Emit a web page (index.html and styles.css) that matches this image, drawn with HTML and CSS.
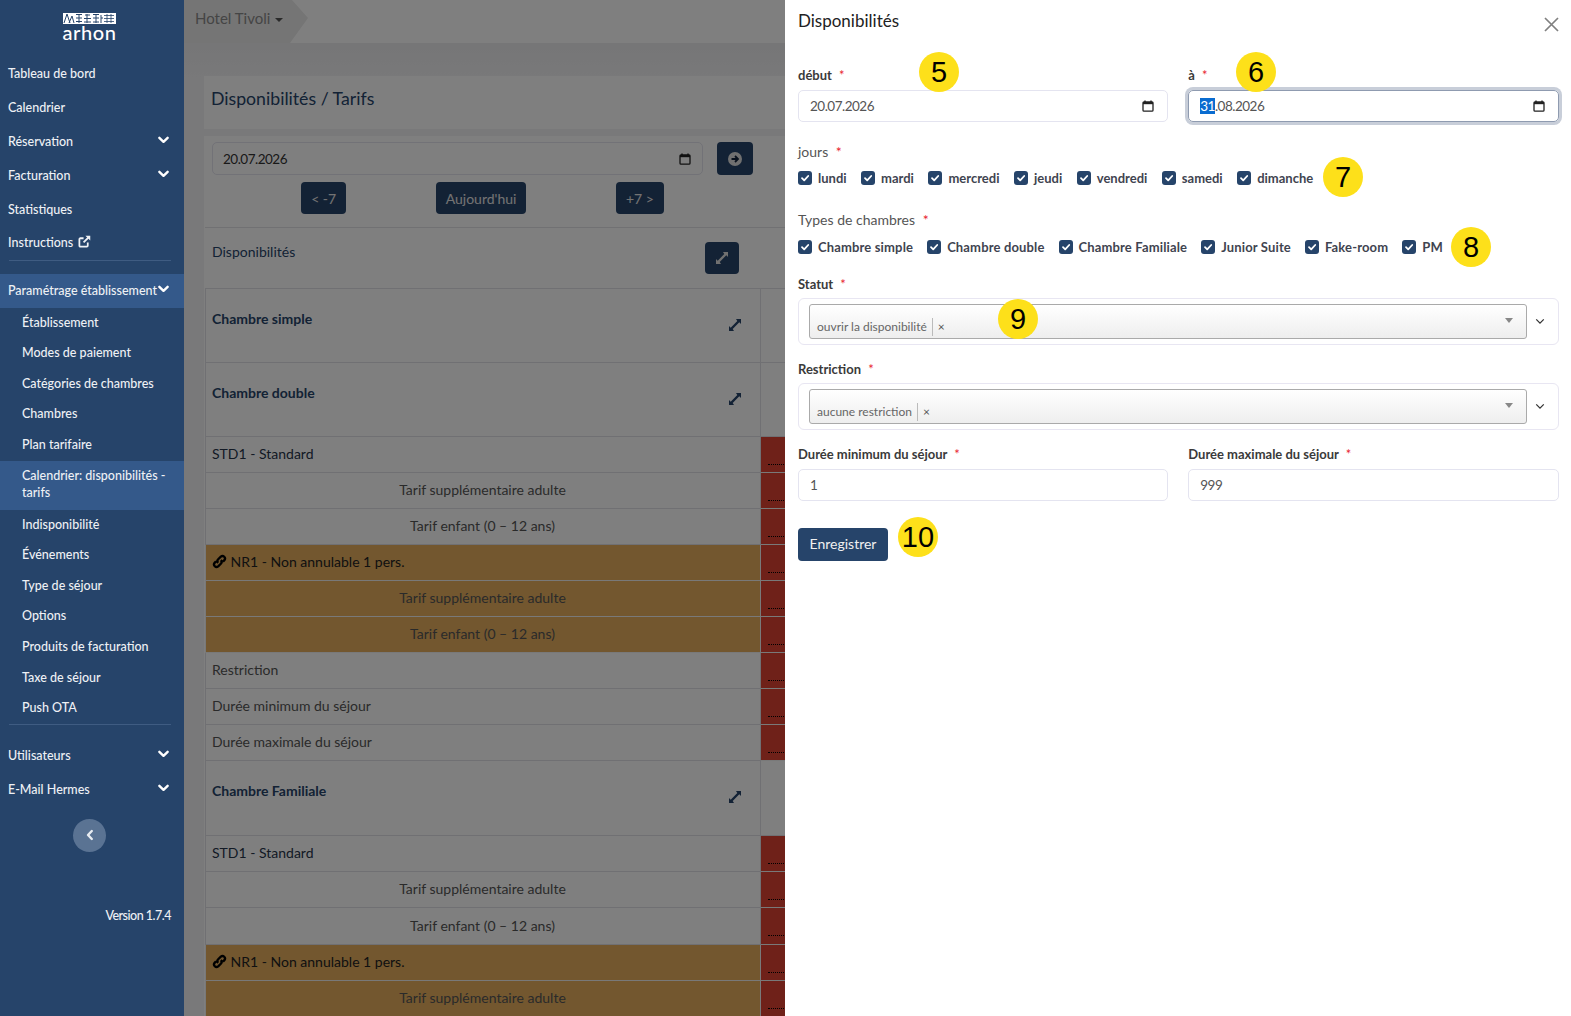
FILE: index.html
```html
<!DOCTYPE html>
<html lang="fr">
<head>
<meta charset="UTF-8" />
<title>Disponibilités / Tarifs</title>
<link rel="stylesheet" href="styles.css">
</head>
<body>
<svg class="sprite" aria-hidden="true">
  <symbol id="i-chevron" viewBox="0 0 12 8"><path d="M1.5 1.6 6 6l4.5-4.4" fill="none" stroke="currentColor" stroke-width="2.6" stroke-linecap="round" stroke-linejoin="round"/></symbol>
  <symbol id="i-calendar" viewBox="0 0 12 12"><path d="M3 .5v2M9 .5v2" stroke="currentColor" stroke-width="1.4" fill="none"/><rect x="1" y="1.8" width="10" height="9.4" rx="1" fill="none" stroke="currentColor" stroke-width="1.3"/><path d="M1 2h10v2.2H1z" fill="currentColor"/></symbol>
  <symbol id="i-check" viewBox="0 0 14 14"><path d="M4 7.2 6.2 9.4 10.2 5" fill="none" stroke="#fff" stroke-width="1.8" stroke-linecap="round" stroke-linejoin="round"/></symbol>
  <symbol id="i-expand" viewBox="0 0 14 14"><path d="M8 1h5v5l-1.700-1.700-6.600 6.600L6 13H1V8l1.700 1.700 6.600-6.600z" fill="currentColor"/></symbol>
  <symbol id="i-link" viewBox="0 0 16 16"><path d="M6.600 9.400a2.700 2.700 0 0 1 0-3.800l2.800-2.800a2.700 2.700 0 0 1 3.800 3.800l-1.500 1.500M9.400 6.600a2.700 2.700 0 0 1 0 3.800l-2.800 2.800a2.700 2.700 0 0 1-3.800-3.800l1.500-1.500" fill="none" stroke="currentColor" stroke-width="2.500"/></symbol>
  <symbol id="i-external" viewBox="0 0 14 14"><path d="M10.500 8v3.500a1 1 0 0 1-1 1h-7a1 1 0 0 1-1-1v-7a1 1 0 0 1 1-1H6" fill="none" stroke="currentColor" stroke-width="1.900"/><path d="M8 .8h5.200V6l-1.900-1.900-4.600 4.600-1.400-1.400 4.600-4.600z" fill="currentColor"/></symbol>
</svg>

<div class="app">
  <aside class="sidebar">
    <div class="logo">
      <svg class="logo-mark" viewBox="0 0 53 11" aria-hidden="true">
        <rect width="53" height="11" fill="#fff"/>
        <path d="M1 10 4 1l3 9M6 10 9 3l2 7M13 1.500h6M13 5h6M13 8.500h6M16 1v9M22 2h5M21 5.500h7M24 1v9M21 9h7M30 1.500h6M30 5h6M30 9h6M33 1v9M38 2v8M38 5h2" stroke="#26446a" stroke-width="1" fill="none"/>
        <path d="M41 2.500h10M41 5.500h10M41 8.500h10M44 1v9M48 1v9" stroke="#26446a" stroke-width=".8" fill="none"/>
      </svg>
      <span class="logo-name">arhon</span>
    </div>
    <nav class="menu">
      <a class="menu-item">Tableau de bord</a>
      <a class="menu-item">Calendrier</a>
      <a class="menu-item">Réservation <svg class="chev"><use href="#i-chevron"/></svg></a>
      <a class="menu-item">Facturation <svg class="chev"><use href="#i-chevron"/></svg></a>
      <a class="menu-item">Statistiques</a>
      <a class="menu-item">Instructions <svg class="ext"><use href="#i-external"/></svg></a>
      <hr class="menu-rule rule-top">
      <a class="menu-item is-open">Paramétrage établissement <svg class="chev"><use href="#i-chevron"/></svg></a>
      <a class="sub-item">Établissement</a>
      <a class="sub-item">Modes de paiement</a>
      <a class="sub-item">Catégories de chambres</a>
      <a class="sub-item">Chambres</a>
      <a class="sub-item">Plan tarifaire</a>
      <a class="sub-item is-active">Calendrier: disponibilités - tarifs</a>
      <a class="sub-item">Indisponibilité</a>
      <a class="sub-item">Événements</a>
      <a class="sub-item">Type de séjour</a>
      <a class="sub-item">Options</a>
      <a class="sub-item">Produits de facturation</a>
      <a class="sub-item">Taxe de séjour</a>
      <a class="sub-item">Push OTA</a>
      <hr class="menu-rule rule-bottom">
      <a class="menu-item">Utilisateurs <svg class="chev"><use href="#i-chevron"/></svg></a>
      <a class="menu-item">E-Mail Hermes <svg class="chev"><use href="#i-chevron"/></svg></a>
    </nav>
    <button class="collapse" type="button"><svg class="collapse-icon" viewBox="0 0 8 12"><path d="M5.800 2 2 6l3.800 4" fill="none" stroke="currentColor" stroke-width="2.400" stroke-linecap="round" stroke-linejoin="round"/></svg></button>
    <div class="version">Version 1.7.4</div>
  </aside>

  <main class="main">
    <header class="topbar">
      <div class="crumb">Hotel Tivoli <span class="caret"></span></div>
    </header>
    <div class="content">
      <div class="page-title">Disponibilités / Tarifs</div>
      <div class="card">
        <div class="date-row">
          <div class="date-input">20.07.2026 <svg class="cal"><use href="#i-calendar"/></svg></div>
          <button class="btn btn-go" type="button">
            <svg class="go-icon" viewBox="0 0 14 14"><circle cx="7" cy="7" r="7" fill="currentColor"/><path d="M3.500 7h6M7 4l3 3-3 3" stroke="#13233a" stroke-width="1.800" fill="none"/></svg>
          </button>
        </div>
        <div class="week-row">
          <button class="btn" type="button">&lt; -7</button>
          <button class="btn" type="button">Aujourd'hui</button>
          <button class="btn" type="button">+7 &gt;</button>
        </div>
        <hr class="card-rule">
        <div class="avail-head">
          <span>Disponibilités</span>
          <button class="btn btn-expand" type="button"><svg class="expand-big"><use href="#i-expand"/></svg></button>
        </div>
        <table class="grid">
          <colgroup><col class="col-label"><col></colgroup>
          <tr class="room"><th><div class="room-cell">Chambre simple <svg class="expand-small"><use href="#i-expand"/></svg></div></th><td></td></tr>
          <tr class="room"><th><div class="room-cell">Chambre double <svg class="expand-small"><use href="#i-expand"/></svg></div></th><td></td></tr>
          <tr><td class="rate">STD1 - Standard</td><td class="red"><div class="dots"></div></td></tr>
          <tr><td class="sub-rate">Tarif supplémentaire adulte</td><td class="red"><div class="dots"></div></td></tr>
          <tr><td class="sub-rate">Tarif enfant (0 – 12 ans)</td><td class="red"><div class="dots"></div></td></tr>
          <tr class="linked"><td class="rate"><svg class="link-icon"><use href="#i-link"/></svg> NR1 - Non annulable 1 pers.</td><td class="red"><div class="dots"></div></td></tr>
          <tr class="linked"><td class="sub-rate">Tarif supplémentaire adulte</td><td class="red"><div class="dots"></div></td></tr>
          <tr class="linked"><td class="sub-rate">Tarif enfant (0 – 12 ans)</td><td class="red"><div class="dots"></div></td></tr>
          <tr><td class="rule-name">Restriction</td><td class="red"><div class="dots"></div></td></tr>
          <tr><td class="rule-name">Durée minimum du séjour</td><td class="red"><div class="dots"></div></td></tr>
          <tr><td class="rule-name">Durée maximale du séjour</td><td class="red"><div class="dots"></div></td></tr>
          <tr class="room room-last"><th><div class="room-cell">Chambre Familiale <svg class="expand-small"><use href="#i-expand"/></svg></div></th><td></td></tr>
          <tr><td class="rate">STD1 - Standard</td><td class="red"><div class="dots"></div></td></tr>
          <tr><td class="sub-rate">Tarif supplémentaire adulte</td><td class="red"><div class="dots"></div></td></tr>
          <tr class="tall"><td class="sub-rate">Tarif enfant (0 – 12 ans)</td><td class="red"><div class="dots"></div></td></tr>
          <tr class="linked"><td class="rate"><svg class="link-icon"><use href="#i-link"/></svg> NR1 - Non annulable 1 pers.</td><td class="red"><div class="dots"></div></td></tr>
          <tr class="linked"><td class="sub-rate">Tarif supplémentaire adulte</td><td class="red"><div class="dots"></div></td></tr>
        </table>
      </div>
    </div>
  </main>
</div>

<div class="backdrop"></div>

<section class="panel">
  <div class="panel-head">
    <h2 class="panel-title">Disponibilités</h2>
    <svg class="close" viewBox="0 0 15 15"><path d="M1 1l13 13M14 1 1 14" stroke="currentColor" stroke-width="1.700" fill="none"/></svg>
  </div>
  <form class="panel-form">
    <div class="two-cols">
      <div>
        <label class="lbl">début <i>*</i></label>
        <div class="field">20.07.2026 <svg class="cal"><use href="#i-calendar"/></svg></div>
      </div>
      <div>
        <label class="lbl">à <i>*</i></label>
        <div class="field is-focus"><span class="sel">31</span>.08.2026 <svg class="cal"><use href="#i-calendar"/></svg></div>
      </div>
    </div>

    <label class="lbl lbl-light lbl-jours">jours <i>*</i></label>
    <div class="checks checks-jours">
      <span class="chk"><svg class="box"><use href="#i-check"/></svg>lundi</span>
      <span class="chk"><svg class="box"><use href="#i-check"/></svg>mardi</span>
      <span class="chk"><svg class="box"><use href="#i-check"/></svg>mercredi</span>
      <span class="chk"><svg class="box"><use href="#i-check"/></svg>jeudi</span>
      <span class="chk"><svg class="box"><use href="#i-check"/></svg>vendredi</span>
      <span class="chk"><svg class="box"><use href="#i-check"/></svg>samedi</span>
      <span class="chk"><svg class="box"><use href="#i-check"/></svg>dimanche</span>
    </div>

    <label class="lbl lbl-light lbl-types">Types de chambres <i>*</i></label>
    <div class="checks checks-types">
      <span class="chk"><svg class="box"><use href="#i-check"/></svg>Chambre simple</span>
      <span class="chk"><svg class="box"><use href="#i-check"/></svg>Chambre double</span>
      <span class="chk"><svg class="box"><use href="#i-check"/></svg>Chambre Familiale</span>
      <span class="chk"><svg class="box"><use href="#i-check"/></svg>Junior Suite</span>
      <span class="chk"><svg class="box"><use href="#i-check"/></svg>Fake-room</span>
      <span class="chk"><svg class="box"><use href="#i-check"/></svg>PM</span>
    </div>

    <label class="lbl lbl-statut">Statut <i>*</i></label>
    <div class="select-wrap">
      <div class="select-inner">
        <span class="tag">ouvrir la disponibilité</span><span class="tag-x">×</span>
        <span class="select-arrow"></span>
      </div>
      <svg class="select-chev" viewBox="0 0 12 8"><path d="M1.500 1.500 6 6l4.500-4.500" fill="none" stroke="currentColor" stroke-width="1.500"/></svg>
    </div>

    <label class="lbl lbl-next">Restriction <i>*</i></label>
    <div class="select-wrap">
      <div class="select-inner">
        <span class="tag">aucune restriction</span><span class="tag-x">×</span>
        <span class="select-arrow"></span>
      </div>
      <svg class="select-chev" viewBox="0 0 12 8"><path d="M1.500 1.500 6 6l4.500-4.500" fill="none" stroke="currentColor" stroke-width="1.500"/></svg>
    </div>

    <div class="two-cols stay-cols">
      <div>
        <label class="lbl">Durée minimum du séjour <i>*</i></label>
        <div class="field">1</div>
      </div>
      <div>
        <label class="lbl">Durée maximale du séjour <i>*</i></label>
        <div class="field">999</div>
      </div>
    </div>

    <button class="save" type="button">Enregistrer</button>
  </form>

  <!-- repères numérotés -->
  <span class="mark mark-5">5</span>
  <span class="mark mark-6">6</span>
  <span class="mark mark-7">7</span>
  <span class="mark mark-8">8</span>
  <span class="mark mark-9">9</span>
  <span class="mark mark-10">10</span>
</section>
</body>
</html>
```

FILE: styles.css
```css
html, body {
  height: 100%;
  margin: 0;
  overflow: hidden;
}
body {
  font-family: Lato, "Noto Sans", sans-serif;
  font-size: 14px;
  color: #333;
  background: #f3f3f5;
}
.sprite {
  display: none;
}
.app {
  display: flex;
  height: 100vh;
}

/* Menu de gauche */
.sidebar {
  position: relative;
  z-index: 2;
  flex: 0 0 184px;
  width: 184px;
  min-width: 0;
  height: 100%;
  background: #26446a;
  color: #eef1f5;
  font-size: 12.5px;
  font-weight: 500;
}
.logo {
  display: flex;
  flex-direction: column;
  align-items: center;
  height: 57px;
  padding: 13px 5px 0 0;
  box-sizing: border-box;
}
.logo-mark {
  display: block;
  width: 53px;
  height: 11px;
}
.logo-name {
  margin-top: -2px;
  font-size: 20px;
  line-height: 20px;
  font-weight: 500;
  letter-spacing: .6px;
  color: #fff;
}
.menu-item {
  display: flex;
  align-items: center;
  justify-content: space-between;
  height: 33.8px;
  padding: 0 15px 0 8px;
  box-sizing: border-box;
}
.menu-item .ext {
  width: 13px;
  height: 13px;
  margin: -2px auto 0 5px;
}
.chev {
  width: 11px;
  height: 8px;
  margin-top: -3px;
  color: #fff;
}
.menu-item.is-open {
  background: #34598a;
  white-space: nowrap;
}
.sub-item {
  display: block;
  padding: 6px 14px 6px 22px;
  line-height: 17px;
  height: 30.6px;
  box-sizing: border-box;
}
.sub-item.is-active {
  height: 49px;
  background: #34598a;
  padding-top: 6px;
}
.menu-rule {
  margin: 0 13px 0 9px;
  border: 0;
  border-top: 1px solid #3f5c82;
}
.rule-top {
  margin-top: 0;
  margin-bottom: 13px;
}
.rule-bottom {
  margin-top: 0;
  margin-bottom: 14px;
}
.collapse {
  display: flex;
  align-items: center;
  justify-content: center;
  width: 33px;
  height: 33px;
  margin: 13px 0 0 73px;
  padding: 0;
  border: 0;
  border-radius: 50%;
  background: #5a7393;
  color: #e8ecf1;
}
.collapse-icon {
  width: 8px;
  height: 12px;
  margin-top: -2px;
}
.version {
  margin-top: 56px;
  padding-right: 13px;
  text-align: right;
  letter-spacing: -.5px;
}

/* Contenu principal */
.main {
  flex: 1;
  min-width: 0;
  overflow: hidden;
}
.topbar {
  height: 43px;
  background: #fff;
}
.crumb {
  width: 124px;
  height: 43px;
  box-sizing: border-box;
  padding: 9px 0 0 11px;
  font-size: 15px;
  color: #8b8b8b;
  background: #eaeaea;
  clip-path: polygon(0 0, 108px 0, 124px 18px, 106px 43px, 0 43px);
}
.caret {
  display: inline-block;
  margin-left: 1px;
  vertical-align: 2px;
  border: 4px solid transparent;
  border-top-color: #555;
  border-bottom: 0;
}
.content {
  padding: 33px 0 0 20px;
  background: linear-gradient(#ececee, #f3f3f5 40px);
}
.page-title {
  height: 53px;
  padding: 12px 0 0 7px;
  box-sizing: border-box;
  background: #fff;
  font-size: 17.7px;
  color: #26446a;
}
.card {
  margin-top: 7px;
  background: #fff;
}
.date-row {
  display: flex;
  gap: 14px;
  width: 541px;
  margin-left: 8px;
  padding-top: 6px;
}
.date-input {
  flex: 1;
  display: flex;
  align-items: center;
  justify-content: space-between;
  height: 33px;
  padding: 0 11px 0 10px;
  box-sizing: border-box;
  border: 1px solid #e4e4ee;
  border-radius: 5px;
  color: #333;
  font-size: 13.5px;
  letter-spacing: -.5px;
}
.cal {
  width: 12px;
  height: 12px;
  color: #222;
}
.btn {
  height: 32px;
  padding: 0 10px;
  border: 0;
  border-radius: 4px;
  background: #26446a;
  color: #e6e6e6;
  font: inherit;
  font-size: 14px;
}
.btn-go {
  width: 36px;
  height: 33px;
  display: flex;
  align-items: center;
  justify-content: center;
  padding: 0;
}
.go-icon {
  width: 14px;
  height: 14px;
  color: #e0e0e0;
}
.week-row {
  display: flex;
  justify-content: center;
  gap: 89.5px;
  width: 541px;
  margin: 7px 0 13px 8px;
}
.card-rule {
  margin: 0 0 0 1px;
  border: 0;
  border-top: 1px solid #e2e2e6;
}
.avail-head {
  display: flex;
  justify-content: space-between;
  width: 534px;
  height: 60px;
  box-sizing: border-box;
  margin-left: 1px;
  padding: 14px 0 0 7px;
  line-height: 20px;
  color: #26446a;
}
.btn-expand {
  width: 34px;
  height: 32px;
  padding: 0;
  display: flex;
  align-items: center;
  justify-content: center;
}
.expand-big {
  width: 14px;
  height: 14px;
  color: #e0e0e0;
}

/* Tableau des tarifs */
.grid {
  width: calc(100% - 1px);
  margin-left: 1px;
  table-layout: fixed;
  border-collapse: collapse;
}
.col-label {
  width: 555px;
}
.grid td, .grid th {
  height: 36px;
  padding: 0 7px 2px 6px;
  box-sizing: border-box;
  border: 1px solid #e0e0e6;
  font-size: 14px;
  font-weight: 400;
  text-align: left;
}
.grid .room th, .grid .room td {
  height: 74px;
  padding: 0 7px 0 6px;
  vertical-align: top;
}
.grid .room-last th, .grid .room-last td {
  height: 75px;
}
.room-cell {
  display: flex;
  justify-content: space-between;
  padding: 21px 11px 0 0;
  font-weight: 700;
  color: #26446a;
}
.expand-small {
  width: 14px;
  height: 14px;
  margin-top: 8px;
  color: #26446a;
}
.grid .rate {
  color: #26344a;
}
.grid .sub-rate {
  text-align: center;
  color: #555;
}
.grid .rule-name {
  color: #555;
}
.grid .tall td {
  height: 37px;
}
.linked td {
  background: #e6ae5e;
  border-color: #f2f2f2;
}
.grid .linked .rate {
  color: #222;
}
.link-icon {
  width: 15px;
  height: 15px;
  vertical-align: -2px;
  color: #000;
}
.grid .red {
  padding: 0 0 0 7px;
  background: #de4232;
  border-color: #f2f2f2;
  vertical-align: top;
}
.dots {
  height: 27px;
  border-bottom: 1px dotted #000;
}

/* Voile et panneau latéral */
.backdrop {
  position: fixed;
  top: 0;
  right: 0;
  bottom: 0;
  left: 184px;
  z-index: 1;
  background: rgba(0, 0, 0, .5);
}
.panel {
  position: fixed;
  top: 0;
  right: 0;
  bottom: 0;
  z-index: 3;
  width: 786px;
  background: #fff;
  color: #333;
  font-size: 13px;
}
.panel-head {
  display: flex;
  justify-content: space-between;
  height: 42px;
  padding: 0 12px 0 13px;
}
.panel-title {
  margin: 0;
  font-size: 17px;
  font-weight: 400;
  line-height: 42px;
  color: #222;
}
.close {
  width: 15px;
  height: 15px;
  margin: 17px 0 0 0;
  color: #808080;
}
.panel-form {
  padding: 24px 12.5px 0 13px;
}
.two-cols {
  display: grid;
  grid-template-columns: 1fr 1fr;
  gap: 20px;
}
.lbl {
  display: block;
  height: 18px;
  line-height: 18px;
  font-weight: 700;
  color: #3a3a3a;
  margin-bottom: 6px;
}
.lbl i {
  font-style: normal;
  font-weight: 400;
  color: #e8232f;
  margin-left: 4px;
}
.lbl-light {
  font-weight: 400;
  font-size: 14px;
  color: #555;
}
.lbl-jours {
  margin-top: 21px;
  margin-bottom: 9px;
}
.lbl-types {
  margin-top: 25px;
  margin-bottom: 10px;
}
.lbl-statut {
  margin-top: 20px;
  margin-bottom: 5px;
}
.lbl-next {
  margin-top: 15px;
  margin-bottom: 5px;
}
.stay-cols {
  margin-top: 15px;
}
.field {
  display: flex;
  align-items: center;
  height: 32px;
  box-sizing: border-box;
  padding: 0 13px 0 11px;
  border: 1px solid #e4e4f0;
  border-radius: 5px;
  color: #555;
  font-size: 13.5px;
  letter-spacing: -.5px;
  white-space: pre;
}
.field .cal {
  margin-left: auto;
}
.field.is-focus {
  border-color: #8f9bb0;
  box-shadow: 0 0 0 3px #c8ced9;
}
.sel {
  background: #0a6cd0;
  color: #fff;
}
.checks {
  display: flex;
  align-items: center;
  height: 16px;
  font-weight: 700;
  color: #3f4450;
}
.checks-jours {
  gap: 14.5px;
}
.checks-types {
  gap: 14px;
  letter-spacing: .15px;
}
.chk {
  display: flex;
  align-items: center;
  white-space: nowrap;
}
.box {
  width: 14px;
  height: 14px;
  margin-right: 6px;
  background: #26446a;
  border-radius: 3px;
}
.select-wrap {
  display: flex;
  align-items: center;
  height: 47px;
  box-sizing: border-box;
  padding: 0 13px 0 10px;
  border: 1px solid #e8e6f2;
  border-radius: 6px;
}
.select-inner {
  flex: 1;
  display: flex;
  align-items: flex-end;
  height: 35px;
  box-sizing: border-box;
  padding: 0 0 2px 7px;
  border: 1px solid #aaa;
  border-radius: 3px;
  background: linear-gradient(#fff, #eee);
  font-size: 12px;
  color: #666;
}
.tag {
  padding-right: 5px;
  border-right: 1px solid #bbb;
  line-height: 18px;
}
.tag-x {
  padding-left: 5px;
  line-height: 18px;
  color: #555;
}
.select-arrow {
  align-self: center;
  margin: 0 13px 0 auto;
  border: 4px solid transparent;
  border-top: 5px solid #888;
  border-bottom: 0;
}
.select-chev {
  width: 10px;
  height: 7px;
  margin-left: 8px;
  color: #333;
}
.save {
  display: block;
  width: 90px;
  height: 33px;
  margin-top: 27px;
  padding: 0 0 2px;
  border: 0;
  border-radius: 4px;
  background: #26446a;
  color: #f0f0f0;
  font: inherit;
  font-size: 14px;
}

/* Repères numérotés, posés par-dessus le formulaire */
.mark {
  position: absolute;
  display: flex;
  align-items: center;
  justify-content: center;
  width: 40px;
  height: 40px;
  border-radius: 50%;
  background: #fde01a;
  color: #000;
  font-family: "Liberation Sans", Arial, sans-serif;
  font-size: 29px;
}
.mark-5 { left: 134px; top: 52px; }
.mark-6 { left: 451px; top: 52px; }
.mark-7 { left: 538px; top: 157px; }
.mark-8 { left: 666px; top: 227px; }
.mark-9 { left: 213px; top: 299px; }
.mark-10 { left: 113px; top: 517px; }
```
